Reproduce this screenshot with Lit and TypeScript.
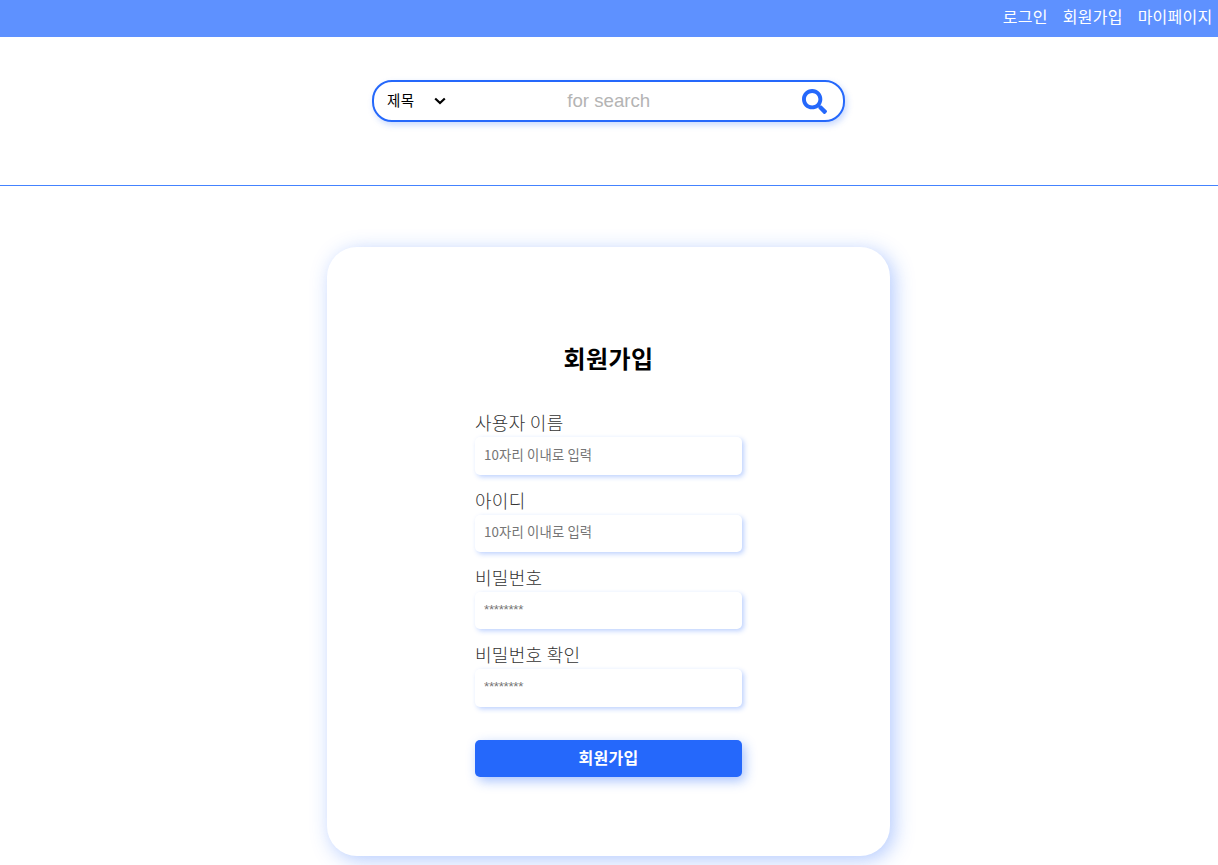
import { LitElement, html, css } from 'lit';
import { customElement, property, state } from 'lit/decorators.js';

interface Field {
    name: string;
    label: string;
    placeholder: string;
    type: string;
}

@customElement('top-nav')
export class TopNav extends LitElement {
    @property({ type: Array }) links: string[] = [];

    static styles = css`
    :host { display: block; }
    nav {
      display: flex;
      justify-content: flex-end;
      gap: 15px;
      box-sizing: border-box;
      height: 37px;
      padding: 4px 5.5px 0 0;
      background-color: #5e91ff;
    }
    a {
      color: #fff;
      font-size: 16px;
      line-height: 24px;
      letter-spacing: 0.25px;
      text-decoration: none;
      cursor: pointer;
    }
    `;

    render() {
        return html`<nav>${this.links.map((link) => html`<a>${link}</a>`)}</nav>`;
    }
}

@customElement('search-bar')
export class SearchBar extends LitElement {
    static styles = css`
    :host { display: block; }
    .search {
      display: flex;
      align-items: center;
      box-sizing: border-box;
      width: 473px;
      height: 42px;
      padding: 0 16px 0 13px;
      border: 2px solid #2568fb;
      border-radius: 20px;
      background-color: #fff;
      box-shadow: 2px 3px 6px rgba(37, 104, 251, 0.25);
    }
    .kind {
      display: flex;
      align-items: center;
      justify-content: space-between;
      width: 58.5px;
      font-size: 14.5px;
      line-height: 20px;
      letter-spacing: 0.3px;
      color: #000;
    }
    .kind span { padding-bottom: 2px; }
    .arrow { display: block; width: 12px; height: 8px; }
    input {
      flex: 1;
      min-width: 0;
      border: 0;
      padding: 0 30px 0 0;
      outline: none;
      background: transparent;
      text-align: center;
      font-family: 'Liberation Sans', Arial, sans-serif;
      font-size: 18.67px;
    }
    input::placeholder { color: #b4b4b4; opacity: 1; }
    .icon { display: block; width: 25px; height: 25px; fill: #2568fb; }
    `;

    render() {
        return html`
      <div class="search">
        <div class="kind">
          <span>제목</span>
          <svg class="arrow" viewBox="0 0 12 8"><path d="M1.2 1.5 L6 6 L10.8 1.5" fill="none" stroke="#000" stroke-width="2.2"/></svg>
        </div>
        <input type="text" placeholder="for search" />
        <svg class="icon" viewBox="0 0 512 512"><path d="M505 442.7L405.3 343c-4.5-4.500-10.600-7-17-7H372c27.600-35.300 44-79.700 44-128C416 93.100 322.900 0 208 0S0 93.100 0 208s93.100 208 208 208c48.300 0 92.700-16.400 128-44v16.300c0 6.400 2.500 12.500 7 17l99.700 99.700c9.400 9.400 24.600 9.400 33.900 0l28.300-28.300c9.400-9.400 9.400-24.600.1-34zM208 336c-70.700 0-128-57.200-128-128 0-70.700 57.200-128 128-128 70.700 0 128 57.200 128 128 0 70.700-57.200 128-128 128z"/></svg>
      </div>
    `;
    }
}

@customElement('join-form')
export class JoinForm extends LitElement {
    @property({ type: Array }) fields: Field[] = [];

    static styles = css`
    :host { display: block; }
    .card {
      display: flex;
      flex-direction: column;
      align-items: center;
      box-sizing: border-box;
      width: 563px;
      height: 609px;
      padding-top: 93px;
      border-radius: 30px;
      background-color: #fff;
      box-shadow: 4px 4px 20px rgba(37, 104, 251, 0.35);
    }
    h1 {
      margin: 0 0 35.3px;
      font-size: 24px;
      font-weight: 700;
      line-height: 36px;
      letter-spacing: 0.4px;
      color: #000;
    }
    form {
      display: flex;
      flex-direction: column;
      width: 267px;
    }
    .field {
      display: flex;
      flex-direction: column;
      gap: 4px;
      height: 77.3px;
    }
    label {
      font-size: 18px;
      font-weight: 300;
      line-height: 22px;
      letter-spacing: 0.3px;
      color: #333;
    }
    input {
      box-sizing: border-box;
      width: 100%;
      height: 37.33px;
      padding: 0 9px 3px;
      border: 0;
      border-radius: 5px;
      outline: none;
      background-color: #fff;
      box-shadow: 2px 2px 5px rgba(37, 104, 251, 0.3);
      font-family: inherit;
      font-size: 13.33px;
      letter-spacing: 0.15px;
    }
    input[type='password'] {
      font-family: 'Liberation Sans', Arial, sans-serif;
      letter-spacing: -0.3px;
    }
    input::placeholder { color: #757575; opacity: 1; }
    button {
      height: 37px;
      margin-top: 19.5px;
      padding: 0 0 3px;
      border: 0;
      border-radius: 5px;
      background-color: #2568fb;
      box-shadow: 3px 4px 12px rgba(37, 104, 251, 0.4);
      color: #fff;
      font-family: inherit;
      font-size: 16px;
      font-weight: 700;
      letter-spacing: 0.28px;
      cursor: pointer;
    }
    `;

    render() {
        return html`
      <div class="card">
        <h1>회원가입</h1>
        <form @submit=${(e: Event) => e.preventDefault()}>
          ${this.fields.map(
            (field) => html`
              <div class="field">
                <label for=${field.name}>${field.label}</label>
                <input id=${field.name} type=${field.type} placeholder=${field.placeholder} />
              </div>
            `
          )}
          <button type="submit">회원가입</button>
        </form>
      </div>
    `;
    }
}

@customElement('app-root')
export class AppRoot extends LitElement {
    @state() private links = ['로그인', '회원가입', '마이페이지'];
    @state() private fields: Field[] = [
        { name: 'username', label: '사용자 이름', placeholder: '10자리 이내로 입력', type: 'text' },
        { name: 'userid', label: '아이디', placeholder: '10자리 이내로 입력', type: 'text' },
        { name: 'password', label: '비밀번호', placeholder: '********', type: 'password' },
        { name: 'confirm', label: '비밀번호 확인', placeholder: '********', type: 'password' },
    ];

    static styles = css`
    :host {
      display: block;
      height: 865px;
      overflow: hidden;
      background-color: #fff;
      font-family: 'Noto Sans CJK KR', sans-serif;
    }
    header {
      display: flex;
      justify-content: center;
      box-sizing: border-box;
      height: 149px;
      padding: 43px 1px 0 0;
      border-bottom: 1px solid #4483ff;
    }
    main {
      display: flex;
      justify-content: center;
      padding: 61px 1px 0 0;
    }
    `;

    render() {
        return html`
      <top-nav .links=${this.links}></top-nav>
      <header><search-bar></search-bar></header>
      <main><join-form .fields=${this.fields}></join-form></main>
    `;
    }
}
